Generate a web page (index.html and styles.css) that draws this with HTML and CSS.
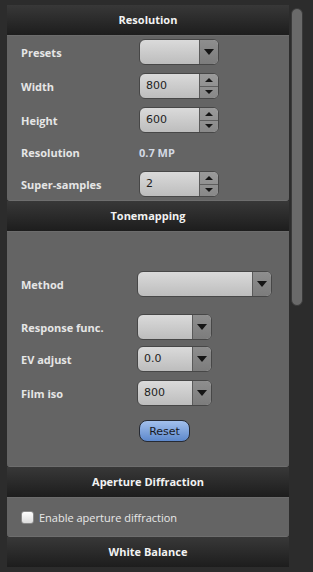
FILE: index.html
```html
<!DOCTYPE html>
<html lang="en">
<head>
  <meta charset="UTF-8">
  <meta name="viewport" content="width=device-width, initial-scale=1.0">
  <title>Render Settings</title>
  <link rel="stylesheet" href="styles.css">
</head>
<body>
  <div class="window">
    <div class="panel">
      <div class="section-head">Resolution</div>
      <div class="section-body res-body">
        <div class="row">
          <span class="label">Presets</span>
          <div class="combo w80"><span class="field"></span><span class="combo-arrow"><i class="tri-down"></i></span></div>
        </div>
        <div class="row">
          <span class="label">Width</span>
          <div class="combo w80"><span class="field">800</span><span class="spin"><span class="spin-half"><i class="tri-up-sm"></i></span><span class="spin-half"><i class="tri-down-sm"></i></span></span></div>
        </div>
        <div class="row">
          <span class="label">Height</span>
          <div class="combo w80"><span class="field">600</span><span class="spin"><span class="spin-half"><i class="tri-up-sm"></i></span><span class="spin-half"><i class="tri-down-sm"></i></span></span></div>
        </div>
        <div class="row row-text">
          <span class="label">Resolution</span>
          <span class="value-text">0.7 MP</span>
        </div>
        <div class="row">
          <span class="label">Super-samples</span>
          <div class="combo w80"><span class="field">2</span><span class="spin"><span class="spin-half"><i class="tri-up-sm"></i></span><span class="spin-half"><i class="tri-down-sm"></i></span></span></div>
        </div>
      </div>

      <div class="section-head">Tonemapping</div>
      <div class="section-body tone-body">
        <div class="row tone-row">
          <span class="label">Method</span>
          <div class="combo w135"><span class="field"></span><span class="combo-arrow"><i class="tri-down"></i></span></div>
        </div>
        <div class="row tone-row gap-response">
          <span class="label">Response func.</span>
          <div class="combo w75"><span class="field"></span><span class="combo-arrow"><i class="tri-down"></i></span></div>
        </div>
        <div class="row tone-row gap-ev">
          <span class="label">EV adjust</span>
          <div class="combo w75"><span class="field">0.0</span><span class="combo-arrow"><i class="tri-down"></i></span></div>
        </div>
        <div class="row tone-row gap-iso">
          <span class="label">Film iso</span>
          <div class="combo w75"><span class="field">800</span><span class="combo-arrow"><i class="tri-down"></i></span></div>
        </div>
        <div class="row button-row">
          <span></span>
          <button class="btn-reset" type="button">Reset</button>
        </div>
      </div>

      <div class="section-head">Aperture Diffraction</div>
      <div class="section-body check-body">
        <label class="check-label"><span class="checkbox"></span>Enable aperture diffraction</label>
      </div>

      <div class="section-head">White Balance</div>
    </div>

    <div class="scrollbar"></div>
  </div>
</body>
</html>
```

FILE: styles.css
```css
body {
  margin: 0;
  background: #2c2c2c;
  font-family: "Open Sans", "DejaVu Sans", sans-serif;
}

.window {
  display: flex;
  align-items: flex-start;
  padding: 5px 0 0 7px;
  height: 567px;
}

.panel {
  width: 282px;
  display: flex;
  flex-direction: column;
}

.section-head {
  height: 30px;
  line-height: 30px;
  text-align: center;
  font-size: 11px;
  font-weight: bold;
  color: #f2f2f2;
  background: linear-gradient(#383838, #1d1d1d);
}

.section-body {
  background: #646464;
  border-top: 1px solid #6c6c6c;
  border-bottom: 1px solid #6e6e6e;
  border-radius: 0 0 3px 3px;
  box-sizing: border-box;
}

.res-body {
  height: 166px;
  padding: 3px 0 0;
  display: flex;
  flex-direction: column;
  gap: 8px;
}

.row {
  display: grid;
  grid-template-columns: 118px auto;
  align-items: center;
  padding-left: 14px;
  height: 26px;
}

.row-text {
  height: 22px;
}

.label {
  font-size: 11px;
  font-weight: bold;
  color: #e6e6e6;
}

.value-text {
  font-size: 11px;
  font-weight: bold;
  color: #d3d9e3;
}

.combo {
  display: flex;
  height: 26px;
  box-sizing: border-box;
  border: 1px solid #474747;
  border-radius: 6px;
  overflow: hidden;
  background: linear-gradient(#dadada, #bdbdbd);
}

.w80 { width: 80px; }
.w75 { width: 75px; }
.w135 { width: 135px; }

.field {
  flex: 1;
  padding-left: 6px;
  line-height: 24px;
  font-family: "DejaVu Sans", sans-serif;
  font-size: 11px;
  color: #1e1e1e;
}

.combo-arrow {
  width: 18px;
  display: flex;
  align-items: center;
  justify-content: center;
  border-left: 1px solid #5a5a5a;
  background: linear-gradient(#8e8e8e, #7c7c7c);
}

.spin {
  width: 18px;
  display: flex;
  flex-direction: column;
  border-left: 1px solid #5a5a5a;
  background: linear-gradient(#9a9a9a, #888888);
}

.spin-half {
  flex: 1;
  display: flex;
  align-items: center;
  justify-content: center;
}

.spin-half + .spin-half {
  border-top: 1px solid #5e5e5e;
}

.tri-down {
  width: 0;
  height: 0;
  border-left: 5px solid transparent;
  border-right: 5px solid transparent;
  border-top: 6px solid #151515;
}

.tri-down-sm {
  width: 0;
  height: 0;
  border-left: 4px solid transparent;
  border-right: 4px solid transparent;
  border-top: 4px solid #151515;
}

.tri-up-sm {
  width: 0;
  height: 0;
  border-left: 4px solid transparent;
  border-right: 4px solid transparent;
  border-bottom: 4px solid #151515;
}

.tone-body {
  height: 236px;
  padding-top: 39px;
  display: flex;
  flex-direction: column;
}

.tone-row {
  grid-template-columns: 116px auto;
}

.gap-response { margin-top: 17px; }
.gap-ev { margin-top: 6px; }
.gap-iso { margin-top: 8px; }

.button-row {
  margin-top: 14px;
  height: 22px;
}

.btn-reset {
  width: 51px;
  height: 22px;
  padding: 0;
  border: 1px solid #262a33;
  border-radius: 8px;
  background: linear-gradient(#a3c0ec, #5d88cc);
  font-family: "DejaVu Sans", sans-serif;
  font-size: 11px;
  color: #16181f;
}

.check-body {
  height: 40px;
  display: flex;
  align-items: center;
  padding-left: 14px;
}

.check-label {
  display: flex;
  align-items: center;
  gap: 5px;
  font-size: 11px;
  color: #e8e8e8;
}

.checkbox {
  width: 13px;
  height: 13px;
  box-sizing: border-box;
  border: 1px solid #8a8a8a;
  border-radius: 3px;
  background: linear-gradient(#ffffff, #dcdcdc);
}

.scrollbar {
  width: 12px;
  height: 298px;
  margin: 3px 0 0 2px;
  box-sizing: border-box;
  border: 1px solid #3a3a3a;
  border-radius: 6px;
  background: #6a6a6a;
}
```
